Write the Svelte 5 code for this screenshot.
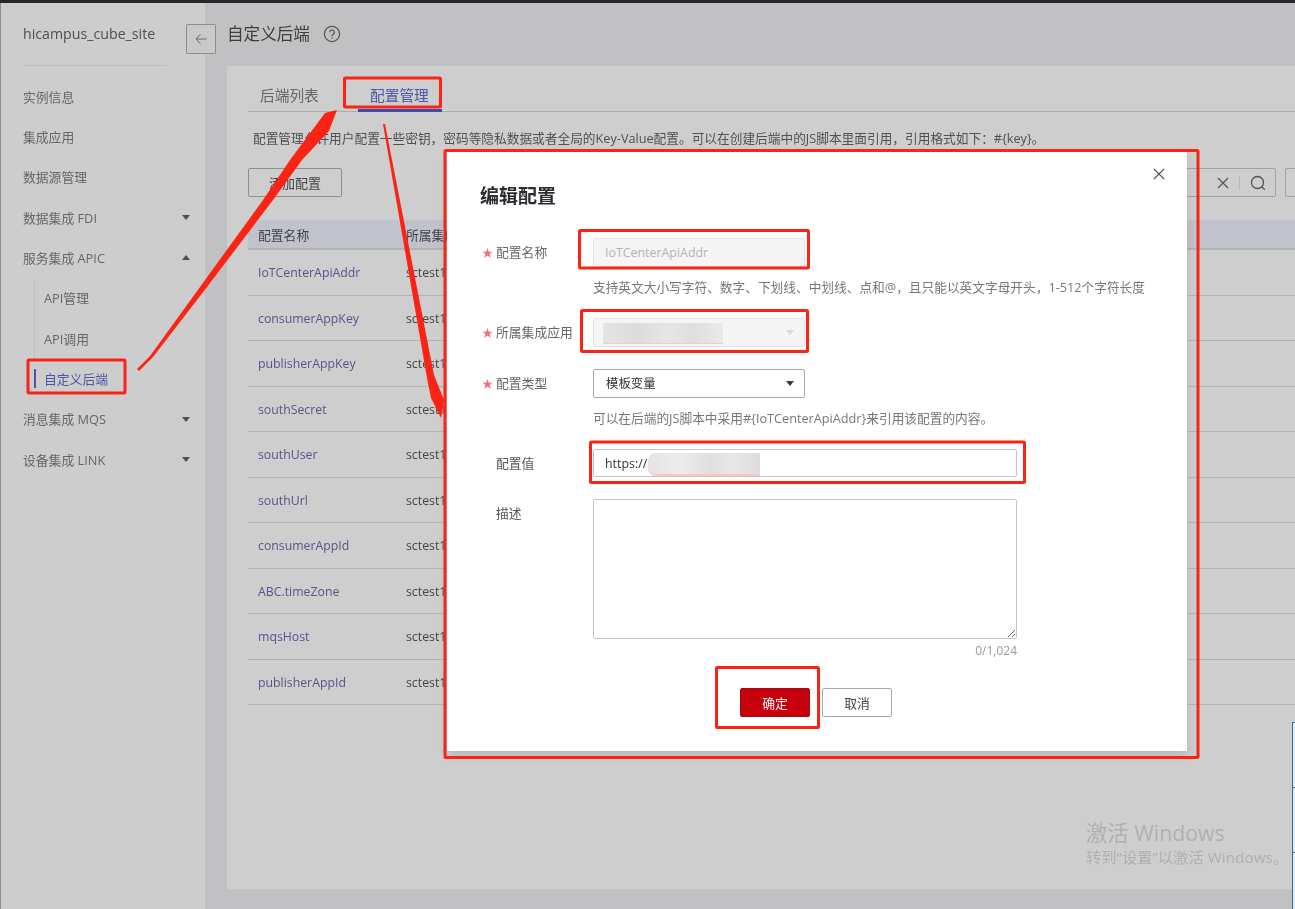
<script>
  const menu = [
    { label: '实例信息' },
    { label: '集成应用' },
    { label: '数据源管理' },
    { label: '数据集成 FDI', caret: 'down' },
    { label: '服务集成 APIC', caret: 'up' },
    { label: 'API管理', sub: true },
    { label: 'API调用', sub: true },
    { label: '自定义后端', sub: true, active: true },
    { label: '消息集成 MQS', caret: 'down' },
    { label: '设备集成 LINK', caret: 'down' }
  ];
  const rows = ['IoTCenterApiAddr','consumerAppKey','publisherAppKey','southSecret','southUser','southUrl','consumerAppId','ABC.timeZone','mqsHost','publisherAppId'];
</script>

<div class="page">
  <aside class="side">
    <div class="brand">hicampus_cube_site</div>
    <nav class="menu">
      {#each menu as m}
        <div class="item" class:sub={m.sub} class:active={m.active}>
          <span>{m.label}</span>
          {#if m.caret}<i class="caret {m.caret}"></i>{/if}
        </div>
      {/each}
    </nav>
  </aside>

  <main class="main">
    <header class="head">
      <button class="back" aria-label="返回">
        <svg width="12" height="12" viewBox="0 0 12 12" fill="none" stroke="#6b6b6b" stroke-width="1"><path d="M11.5 6H1M5.5 1.2 1 6l4.500 4.800"/></svg>
      </button>
      <h1>自定义后端</h1>
      <svg class="help" width="18" height="18" viewBox="0 0 18 18" fill="none" stroke="#555" stroke-width="1.300"><circle cx="9" cy="9" r="7.600"/><path d="M6.700 7.200a2.300 2.300 0 1 1 3.500 2c-.8.500-1.200.9-1.200 1.800"/><path d="M9 12.300v1.300"/></svg>
    </header>

    <section class="card">
      <div class="tabs">
        <span class="tab">后端列表</span>
        <span class="tab on">配置管理</span>
      </div>
      <p class="desc">配置管理允许用户配置一些密钥，密码等隐私数据或者全局的Key-Value配置。可以在创建后端中的JS脚本里面引用，引用格式如下：#&#123;key&#125;。</p>
      <div class="tools">
        <button class="add">添加配置</button>
        <div class="search">
          <svg width="12" height="12" viewBox="0 0 12 12" stroke="#555" stroke-width="1.200"><path d="M1 1l10 10M11 1 1 11"/></svg>
          <b></b>
          <svg width="16" height="16" viewBox="0 0 16 16" fill="none" stroke="#555" stroke-width="1.300"><circle cx="7.500" cy="7.500" r="6"/><path d="m11.800 11.800 3 3"/></svg>
        </div>
        <div class="stub"></div>
      </div>
      <div class="thead"><span class="c1">配置名称</span><span>所属集成应用</span></div>
      {#each rows as r}
        <div class="row"><span class="c1 link">{r}</span><span class="own">sctest1</span></div>
      {/each}
    </section>
  </main>

  <div class="watermark">
    <div class="w1">激活 Windows</div>
    <div class="w2">转到“设置”以激活 Windows。</div>
  </div>
  <div class="edge"></div>

  <div class="modal">
    <svg class="close" width="12" height="12" viewBox="0 0 12 12" stroke="#444" stroke-width="1.200"><path d="M.8.800l10.400 10.400M11.200.800.8 11.200"/></svg>
    <h2>编辑配置</h2>

    <div class="f r1"><label><em>★</em>配置名称</label><div class="ctl off name">IoTCenterApiAddr</div></div>
    <div class="hint h1">支持英文大小写字符、数字、下划线、中划线、点和@，且只能以英文字母开头，1-512个字符长度</div>
    <div class="f r2"><label><em>★</em>所属集成应用</label><div class="ctl off name"><span class="mosaic m1"></span><i class="tri pale"></i></div></div>
    <div class="f r3"><label><em>★</em>配置类型</label><div class="ctl name sel">模板变量<i class="tri"></i></div></div>
    <div class="hint h2">可以在后端的JS脚本中采用#&#123;IoTCenterApiAddr&#125;来引用该配置的内容。</div>
    <div class="f r4"><label class="plain">配置值</label><div class="ctl wide">https://<span class="mosaic m2"></span></div></div>
    <div class="f r5"><label class="plain">描述</label><textarea class="area" aria-label="描述"></textarea></div>
    <div class="count">0/1,024</div>
    <div class="btns"><button class="ok">确定</button><button class="no">取消</button></div>
  </div>

  <svg class="marks" width="1295" height="909" viewBox="0 0 1295 909" fill="none" stroke="#fb2315" stroke-width="3" stroke-linejoin="round">
    <rect x="344.500" y="78" width="96" height="29" rx="1"/>
    <rect x="28" y="360" width="97" height="33" rx="1"/>
    <rect x="579.500" y="230.500" width="229" height="37.500" rx="1"/>
    <rect x="581.500" y="310.500" width="226" height="41" rx="1"/>
    <rect x="590.500" y="442" width="434" height="40.500" rx="1"/>
    <rect x="716.500" y="667.500" width="102" height="60" rx="1"/>
    <rect x="445" y="150.500" width="753" height="607" rx="1"/>
    <polygon fill="#fb2315" stroke="none" points="137,369 150,356 200,287 263,200 290,160 325,113 337,110 329,131 302,160 273,200 207,287 153,357 139,371"/>
    <polygon fill="#fb2315" stroke="none" points="383,124 385,124 434,375 444,400 441,418 431,398 427,378"/>
  </svg>
</div>

<style>
  :global(body) { margin: 0; }
  .page {
    position: relative;
    display: flex;
    width: 1295px;
    height: 909px;
    box-sizing: border-box;
    border-top: 3px solid #26272c;
    overflow: hidden;
    background: #c1c1c3;
    font-family: "Open Sans", "Noto Sans CJK SC", sans-serif;
    color: #555;
  }
  .side {
    width: 205px;
    flex: none;
    box-sizing: border-box;
    background: #cdcdcd;
    border-left: 1px solid #8e8e8e;
    padding-left: 22px;
    filter: blur(.35px);
  }
  .brand {
    width: 144px;
    height: 63px;
    box-sizing: border-box;
    padding-top: 21px;
    border-bottom: 1px solid #bebebe;
    font-size: 14.200px;
    line-height: 20px;
    color: #4e4e4e;
    white-space: nowrap;
  }
  .menu { margin-top: 10px; }
  .item {
    position: relative;
    height: 40.350px;
    display: flex;
    align-items: center;
    font-size: 12.800px;
    color: #666;
    white-space: nowrap;
  }
  .item.sub { padding-left: 21px; }
  .item.sub::before {
    content: "";
    position: absolute;
    left: 11px;
    top: 0;
    bottom: 0;
    width: 1px;
    background: #bdbdbd;
  }
  .item.active { color: #4d55a5; }
  .item.active::before { width: 2px; top: 11px; bottom: 11px; background: #4b55a8; }
  .caret {
    position: absolute;
    left: 159px;
    top: 18px;
    border-left: 4px solid transparent;
    border-right: 4px solid transparent;
  }
  .caret.down { border-top: 5px solid #4f4f4f; }
  .caret.up { border-bottom: 5px solid #4f4f4f; }

  .main { flex: 1; min-width: 0; filter: blur(.35px); }
  .head {
    height: 63px;
    box-sizing: border-box;
    padding-top: 21px;
    display: flex;
    align-items: flex-start;
  }
  .back {
    width: 30px;
    height: 30px;
    margin-left: -19px;
    padding: 0;
    border: 1px solid #8d8d8d;
    border-radius: 1px;
    background: #c9c9c9;
    display: flex;
    align-items: center;
    justify-content: center;
  }
  h1 {
    margin: 0 0 0 11px;
    font-size: 16.600px;
    font-weight: 400;
    line-height: 20px;
    color: #3d3d3d;
  }
  .help { margin: 1px 0 0 13px; }
  .card {
    margin-left: 22px;
    height: 823px;
    background: #cecece;
    padding: 0 0 0 21px;
    box-sizing: border-box;
  }
  .tabs {
    height: 46px;
    box-sizing: border-box;
    border-bottom: 1px solid #aeaeae;
    display: flex;
    font-size: 14.700px;
    line-height: 20px;
  }
  .tab { padding: 19px 0 0 12px; width: 98px; box-sizing: border-box; height: 46px; color: #666; }
  .tab.on {
    color: #4d55a5;
    width: 84px;
    margin-left: 12px;
    padding-left: 12px;
    border-bottom: 3px solid #3f4ba6;
  }
  .desc {
    margin: 17px 0 0 5px;
    font-size: 12.700px;
    line-height: 18px;
    color: #505050;
    white-space: nowrap;
  }
  .tools { display: flex; margin-top: 21px; height: 29px; }
  .add {
    width: 94px;
    height: 29px;
    padding: 0;
    border: 1px solid #8f8f8f;
    border-radius: 2px;
    background: #cecece;
    font: 13px "Open Sans", "Noto Sans CJK SC", sans-serif;
    color: #444;
  }
  .search {
    margin-left: auto;
    width: 110px;
    height: 29px;
    box-sizing: border-box;
    border: 1px solid #a2a2a2;
    border-radius: 2px;
    display: flex;
    align-items: center;
    justify-content: flex-end;
    gap: 10px;
    padding-right: 9px;
  }
  .search b { width: 1px; height: 14px; background: #b8b8b8; }
  .stub {
    width: 10px;
    height: 29px;
    margin-left: 9px;
    box-sizing: border-box;
    border: 1px solid #a2a2a2;
    border-right: 0;
    border-radius: 2px 0 0 2px;
  }
  .thead {
    margin-top: 23px;
    height: 30px;
    box-sizing: border-box;
    background: #c0c3cb;
    border-bottom: 2px solid #b3b3b6;
    display: flex;
    align-items: center;
    font-size: 12.800px;
    color: #444;
  }
  .c1 { width: 158px; padding-left: 10px; box-sizing: border-box; }
  .row {
    height: 45.530px;
    box-sizing: border-box;
    padding-top: 1px;
    border-bottom: 1px solid #b4b4b4;
    display: flex;
    align-items: center;
    font-size: 12.300px;
    color: #444;
  }
  .link { color: #55558a; white-space: nowrap; }

  .watermark { position: absolute; left: 1086px; top: 817px; color: #b0b0b0; white-space: nowrap; filter: blur(.4px); }
  .w1 { font-size: 21.300px; line-height: 26px; }
  .w2 { font-size: 15.300px; line-height: 23px; }
  .edge {
    position: absolute;
    left: 1292px;
    top: 719px;
    width: 3px;
    height: 190px;
    background: linear-gradient(#1477c5, #1477c5) 0 64px / 100% 1px no-repeat,
      linear-gradient(#1477c5, #1477c5) 0 129px / 100% 1px no-repeat,
      #e9e9e9;
    border-left: 1px solid #1477c5;
    border-top: 1px solid #1477c5;
    box-sizing: border-box;
  }

  .modal {
    position: absolute;
    left: 447px;
    top: 149px;
    width: 740px;
    height: 599px;
    box-sizing: border-box;
    padding: 31px 0 0 37px;
    background: #fff;
    color: #555;
    box-shadow: 0 4px 10px rgba(0,0,0,.12);
    filter: blur(.3px);
  }
  .close { position: absolute; left: 706px; top: 16px; }
  h2 {
    margin: 0 0 0 -4px;
    height: 26px;
    font-size: 19px;
    line-height: 26px;
    font-weight: 700;
    color: #2b2b33;
  }
  .f { display: flex; }
  label {
    width: 111px;
    height: 28px;
    flex: none;
    margin-left: -2px;
    font-size: 12.800px;
    line-height: 28px;
    color: #666;
    white-space: nowrap;
    display: block;
    box-sizing: border-box;
  }
  label em { font-style: normal; color: #f26d7d; font-size: 11px; margin-right: 3px; }
  label.plain { padding-left: 14px; color: #555; }
  .ctl {
    position: relative;
    box-sizing: border-box;
    height: 29px;
    border: 1px solid #a9a9a9;
    border-radius: 2px;
    padding-left: 11px;
    font-size: 12.400px;
    line-height: 27px;
    color: #444;
    display: flex;
    align-items: center;
  }
  .name { width: 212px; }
  .off { background: #f5f5f5; border-color: #e3e3e3; color: #b3b3b3; }
  .sel { padding-left: 12px; color: #333; }
  .wide { width: 424px; height: 28px; border-color: #c5c5c5; color: #333; }
  .tri {
    position: absolute;
    right: 10px;
    top: 11px;
    border-left: 4px solid transparent;
    border-right: 4px solid transparent;
    border-top: 5px solid #3a3a3a;
  }
  .tri.pale { border-top-color: #d8d8d8; }
  .mosaic { position: absolute; }
  .m1 {
    left: 9px;
    top: 4px;
    width: 120px;
    height: 20px;
    background: linear-gradient(90deg, #e4e4e4, #dcdcdc 30%, #e6e6e6 55%, #dedede 75%, #eaeaea);
    border-bottom: 1px solid #f8c9c6;
  }
  .m2 {
    left: 54px;
    top: 3px;
    width: 112px;
    height: 21px;
    border-radius: 8px 0 0 8px;
    background: linear-gradient(90deg, #e4e4e4, #ededed 30%, #dedede 55%, #e8e8e8 75%, #dddddd);
    border-bottom: 2px solid #f9c6c2;
  }
  .r1 { margin-top: 29px; }
  .hint {
    margin-left: 109px;
    font-size: 12.700px;
    line-height: 16px;
    color: #777;
    white-space: nowrap;
  }
  .h1 { margin-top: 12px; }
  .r2 { margin-top: 23px; }
  .r3 { margin-top: 22px; }
  .h2 { margin-top: 12px; }
  .r4 { margin-top: 23px; }
  .r5 { margin-top: 22px; }
  .area {
    display: block;
    width: 424px;
    height: 140px;
    box-sizing: border-box;
    margin: 0;
    border: 1px solid #c5c5c5;
    border-radius: 2px;
    background: #fff;
  }
  .count {
    width: 533px;
    margin-top: 4px;
    text-align: right;
    font-size: 12px;
    line-height: 16px;
    color: #9a9a9a;
  }
  .btns { display: flex; gap: 12px; margin: 29px 0 0 256px; }
  .btns button {
    width: 70px;
    height: 29px;
    padding: 0;
    border-radius: 2px;
    font: 12.800px "Open Sans", "Noto Sans CJK SC", sans-serif;
  }
  .ok { background: #c7000b; border: 1px solid #96101b; color: #fff; }
  .no { background: #fff; border: 1px solid #a9a9a9; color: #444; }
  .marks { position: absolute; left: 0; top: -3px; pointer-events: none; }
</style>
